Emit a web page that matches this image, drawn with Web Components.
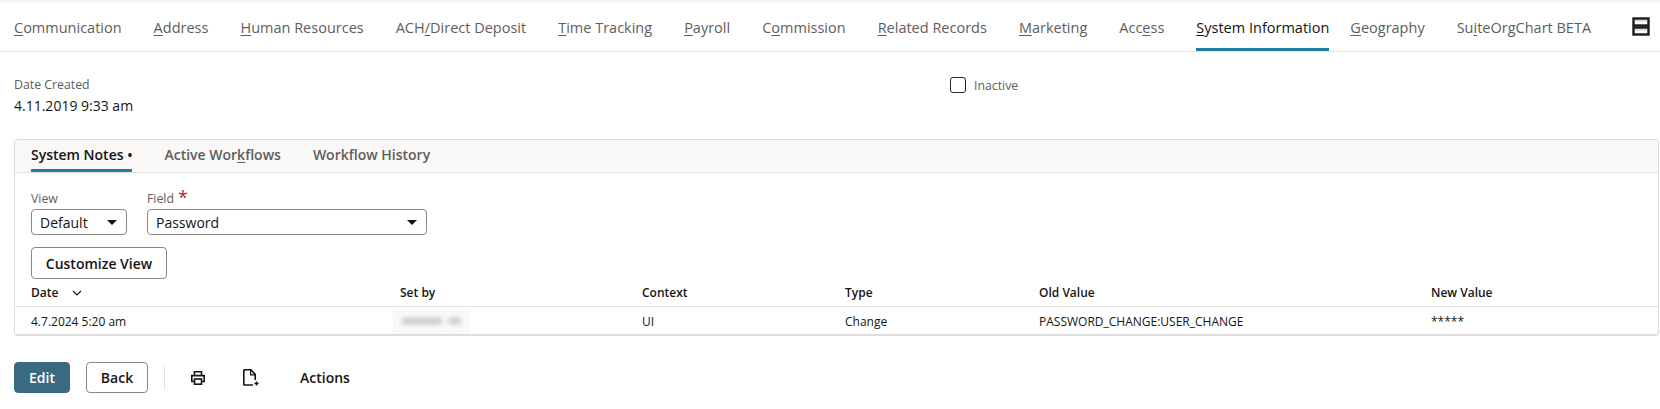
<!DOCTYPE html>
<html>
<head>
<meta charset="utf-8">
<title>System Information</title>
<style>
  html, body { margin: 0; background: #fff; }
  body { font-family: "Open Sans", "Noto Sans", sans-serif; color: #161513; overflow: hidden; }
  u { text-underline-offset: 2px; text-decoration-thickness: 1px; }
</style>
</head>
<body>
<ns-page>
  <ns-subtabs>
    <ns-subtab><u>C</u>ommunication</ns-subtab>
    <ns-subtab><u>A</u>ddress</ns-subtab>
    <ns-subtab><u>H</u>uman Resources</ns-subtab>
    <ns-subtab>ACH<u>/</u>Direct Deposit</ns-subtab>
    <ns-subtab><u>T</u>ime Tracking</ns-subtab>
    <ns-subtab><u>P</u>ayroll</ns-subtab>
    <ns-subtab>C<u>o</u>mmission</ns-subtab>
    <ns-subtab><u>R</u>elated Records</ns-subtab>
    <ns-subtab><u>M</u>arketing</ns-subtab>
    <ns-subtab>Acc<u>e</u>ss</ns-subtab>
    <ns-subtab active tight><u>S</u>ystem Information</ns-subtab>
    <ns-subtab><u>G</u>eography</ns-subtab>
    <ns-subtab>Su<u>i</u>teOrgChart BETA</ns-subtab>
  </ns-subtabs>

  <ns-fields>
    <ns-field label="Date Created">4.11.2019 9:33 am</ns-field>
    <ns-checkbox>Inactive</ns-checkbox>
  </ns-fields>

  <ns-card>
    <ns-cardtab slot="tabs" active>System Notes •</ns-cardtab>
    <ns-cardtab slot="tabs">Active Wor<u>k</u>flows</ns-cardtab>
    <ns-cardtab slot="tabs">Workflow History</ns-cardtab>

    <ns-filters>
      <ns-select label="View" width="96">Default</ns-select>
      <ns-select label="Field" width="280" required>Password</ns-select>
    </ns-filters>
    <ns-button class="customize">Customize View</ns-button>

    <ns-row head>
      <span>Date <ns-chevron></ns-chevron></span><span>Set by</span><span>Context</span><span>Type</span><span>Old Value</span><span>New Value</span>
    </ns-row>
    <ns-row>
      <span>4.7.2024 5:20 am</span><span><ns-redacted></ns-redacted></span><span>UI</span><span>Change</span><span>PASSWORD_CHANGE:USER_CHANGE</span><span>*****</span>
    </ns-row>
  </ns-card>

  <ns-toolbar>
    <ns-button primary>Edit</ns-button>
    <ns-button>Back</ns-button>
    <ns-sep></ns-sep>
    <ns-icon name="print"></ns-icon>
    <ns-icon name="file"></ns-icon>
    <ns-action>Actions</ns-action>
  </ns-toolbar>
</ns-page>

<script>
// small helper so every element below reads the same
function define(name, html) {
  class El extends HTMLElement {
    constructor() {
      super();
      this._shadowRoot = this.attachShadow({ mode: "open" });
    }
    connectedCallback() {
      this._shadowRoot.innerHTML = typeof html === "function" ? html(this) : html;
    }
  }
  customElements.define(name, El);
}

define("ns-page", `
  <style>
    :host { display: block; width: 1660px; height: 409px; box-sizing: border-box; border-top: 3px solid #f9f7f5; }
  </style>
  <slot></slot>`);

define("ns-subtabs", `
  <style>
    :host { display: flex; height: 48px; border-bottom: 1px solid #e4e2e0; padding-left: 14px; position: relative; }
    svg { position: absolute; left: 1632px; top: 14px; }
  </style>
  <slot></slot>
  <svg width="18" height="19" viewBox="0 0 18 19">
    <rect x="1.5" y="1.5" width="15" height="7" fill="#fff" stroke="#1d1b1a" stroke-width="2.4"/>
    <rect x="1.5" y="10.5" width="15" height="7" fill="#fff" stroke="#1d1b1a" stroke-width="2.4"/>
    <rect x="3" y="3" width="12" height="1.5" fill="#d8d8d8"/>
    <rect x="3" y="12" width="12" height="1.5" fill="#d8d8d8"/>
  </svg>`);

define("ns-subtab", `
  <style>
    :host { display: flex; align-items: center; box-sizing: border-box; height: 48px; margin-right: 32px; font-size: 14.5px; font-weight: 500; color: #5f5d5b; white-space: nowrap; border-bottom: 3px solid transparent; padding-top: 3px; }
    :host([active]) { color: #161513; border-bottom-color: #227e9e; }
    :host([tight]) { margin-right: 21px; }
  </style>
  <slot></slot>`);

define("ns-fields", `
  <style>
    :host { display: grid; grid-template-columns: 936px 1fr; padding: 25px 0 0 14px; height: 62px; }
  </style>
  <slot></slot>`);

define("ns-field", el => `
  <style>
    :host { display: block; }
    .l { font-size: 12.3px; line-height: 16px; color: #5f5d5b; }
    .v { font-size: 14px; line-height: 20px; margin-top: 3px; color: #161513; }
  </style>
  <div class="l">${el.getAttribute("label")}</div>
  <div class="v"><slot></slot></div>`);

define("ns-checkbox", `
  <style>
    :host { display: flex; align-items: center; align-self: start; gap: 8px; font-size: 12.3px; color: #5f5d5b; height: 16px; margin-top: 0; }
    i { display: block; width: 14px; height: 14px; border: 1px solid #2b2927; border-radius: 3px; }
  </style>
  <i></i><slot></slot>`);

define("ns-card", `
  <style>
    :host { display: block; margin: 0 0 0 14px; width: 1645px; box-sizing: border-box; height: 197px; border: 1px solid #dfdddb; border-bottom: 2px solid #dfdddb; border-radius: 4px; }
    .tabs { display: flex; height: 32px; background: #f9f8f6; border-bottom: 1px solid #e4e2e0; padding-left: 16px; gap: 32px; border-radius: 4px 4px 0 0; }
  </style>
  <div class="tabs"><slot name="tabs"></slot></div>
  <slot></slot>`);

define("ns-cardtab", `
  <style>
    :host { display: flex; align-items: center; box-sizing: border-box; height: 32px; font-size: 14px; font-weight: 600; color: #5f5d5b; border-bottom: 3px solid transparent; padding-top: 0; white-space: nowrap; }
    :host([active]) { color: #161513; border-bottom-color: #227e9e; }
  </style>
  <slot></slot>`);

define("ns-filters", `
  <style>
    :host { display: flex; gap: 20px; padding: 16px 0 0 16px; }
  </style>
  <slot></slot>`);

define("ns-select", el => `
  <style>
    :host { display: block; font-size: 12.3px; color: #5f5d5b; }
    .l { height: 20px; line-height: 19px; display: flex; gap: 4px; }
    .star { color: #b3261e; font-size: 18px; line-height: 16px; }
    .box { box-sizing: border-box; width: ${el.getAttribute("width")}px; height: 26px; border: 1px solid #8b8987; border-radius: 4px; display: flex; align-items: center; justify-content: space-between; padding: 0 9px 0 8px; font-size: 14px; color: #161513; }
    .caret { width: 0; height: 0; border: 5px solid transparent; border-top: 5px solid #161513; border-bottom: 0; }
  </style>
  <div class="l">${el.getAttribute("label")}${el.hasAttribute("required") ? '<span class="star">*</span>' : ""}</div>
  <div class="box"><slot></slot><span class="caret"></span></div>`);

define("ns-button", `
  <style>
    :host { display: inline-flex; align-items: center; justify-content: center; box-sizing: border-box; height: 31px; width: 62px; background: #fff; border: 1px solid #8b8987; border-radius: 4px; font-size: 14px; font-weight: 600; color: #161513; white-space: nowrap; }
    :host([primary]) { background: #3a6a80; border-color: #3a6a80; color: #fff; width: 56px; }
    :host(.customize) { display: flex; width: 136px; height: 32px; margin: 12px 0 0 16px; }
  </style>
  <slot></slot>`);

define("ns-row", `
  <style>
    :host { display: grid; grid-template-columns: 369px 242px 203px 194px 392px 1fr; box-sizing: border-box; padding-left: 16px; font-size: 12px; height: 29px; align-items: center; color: #161513; white-space: nowrap; }
    :host([head]) { font-weight: 600; height: 28px; border-bottom: 1px solid #e4e2e0; }
  </style>
  <slot></slot>`);

define("ns-chevron", `
  <style>
    :host { display: inline-block; margin-left: 10px; vertical-align: 1px; }
    svg { display: block; }
  </style>
  <svg width="10" height="6" viewBox="0 0 10 6"><path d="M1 1l4 4 4-4" fill="none" stroke="#161513" stroke-width="1.2"/></svg>`);

// the person's name is blurred out in the reference: no text, only the smear
define("ns-redacted", `
  <style>
    :host { display: block; position: relative; width: 77px; height: 24px; margin: 0 0 0 -7px; background: #f9f9f9; overflow: hidden; }
    i { position: absolute; top: 8px; height: 6px; background: #c6c6c6; filter: blur(2.5px); }
    .a { left: 9px; width: 40px; }
    .b { left: 56px; width: 12px; }
  </style>
  <i class="a"></i><i class="b"></i>`);

define("ns-toolbar", `
  <style>
    :host { display: flex; align-items: center; padding: 26px 0 0 14px; height: 31px; }
    ::slotted(ns-button) { margin-right: 16px; }
  </style>
  <slot></slot>`);

define("ns-sep", `
  <style>
    :host { display: block; width: 1px; height: 24px; background: #e4e2e0; margin-right: 26px; }
  </style>`);

const ICONS = {
  print: `<svg width="14" height="14" viewBox="0 0 14 14" fill="none" stroke="#161513" stroke-width="1.6"><path d="M3.5 4.5V.8h7v3.7"/><path d="M3.5 10.5H.8V4.6h12.4v5.9h-2.7"/><rect x="3.5" y="8" width="7" height="5.2"/></svg>`,
  file: `<svg width="16" height="17" viewBox="0 0 16 17" fill="none" stroke="#161513" stroke-width="1.6"><path d="M10 16H1.3a.5.5 0 0 1-.5-.5V1.3a.5.5 0 0 1 .5-.5h6.5l4.4 4.6V11"/><path d="M7.6 1v4.8h4.4" stroke-width="1.2"/><path d="M13.5 12.5v4M11.5 14.5h4" stroke-width="1.5"/></svg>`
};

define("ns-icon", el => `
  <style>
    :host { display: flex; width: 16px; margin-right: 36px; }
    svg { display: block; }
  </style>
  ${ICONS[el.getAttribute("name")]}`);

define("ns-action", `
  <style>
    :host { display: block; font-size: 14px; font-weight: 600; color: #161513; margin-left: 5px; }
  </style>
  <slot></slot>`);
</script>
</body>
</html>
